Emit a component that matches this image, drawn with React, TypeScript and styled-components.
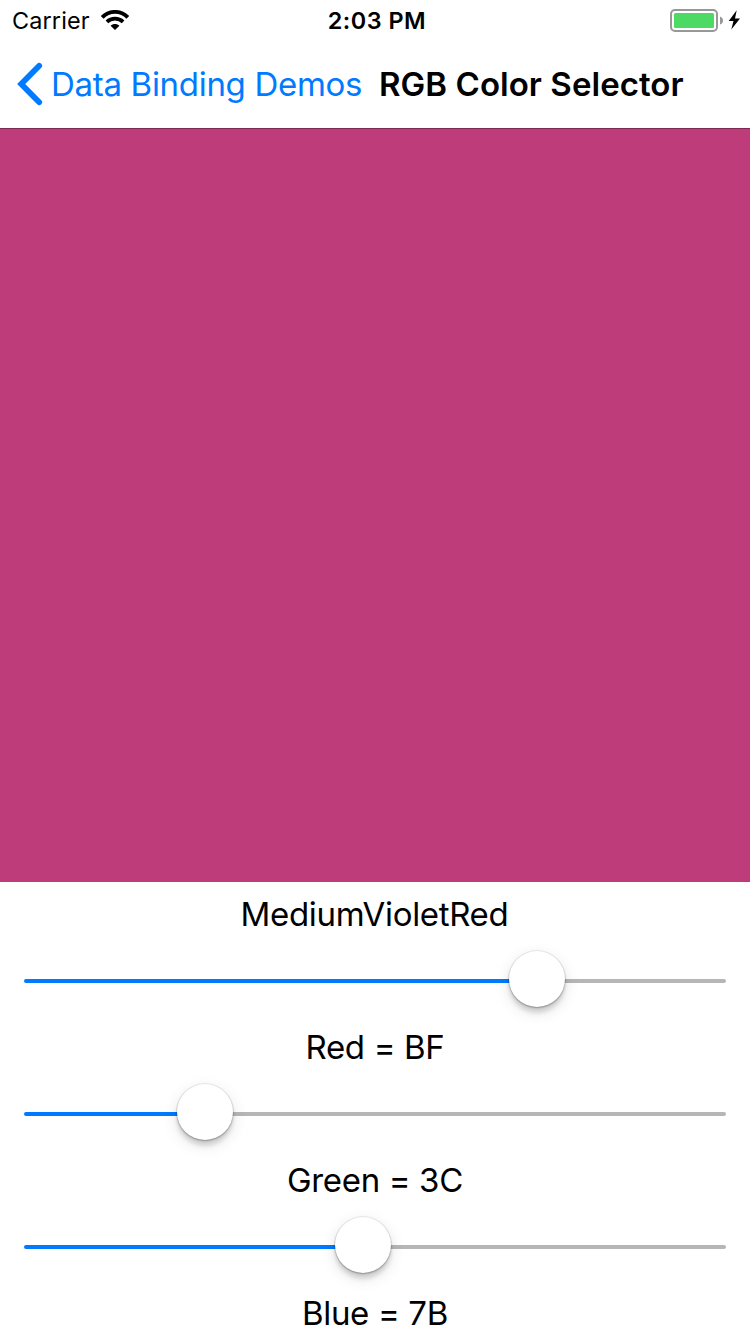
import React, { useState } from 'react';
import styled, { createGlobalStyle } from 'styled-components';

const GlobalStyle = createGlobalStyle`
  body { margin: 0; background: #fff; overflow: hidden; }
  * { box-sizing: border-box; }
`;

const Screen = styled.div`
  width: 750px;
  height: 1334px;
  overflow: hidden;
  display: flex;
  flex-direction: column;
  background: #fff;
  color: #000;
  font-family: Inter, 'Liberation Sans', sans-serif;
`;

const StatusBar = styled.header`
  flex: none;
  height: 40px;
  display: grid;
  grid-template-columns: 1fr auto 1fr;
  align-items: center;
  padding: 0 8px 0 12px;
`;

const StatusGroup = styled.div<{ $end?: boolean }>`
  display: flex;
  align-items: center;
  justify-content: ${(p) => (p.$end ? 'flex-end' : 'flex-start')};
`;

const Carrier = styled.span`
  font-size: 23.4px;
  line-height: 38px;
  padding-top: 2px;
  letter-spacing: 0.15px;
  margin-right: 11px;
`;

const Clock = styled.span`
  font-size: 23.4px;
  line-height: 38px;
  padding-top: 2px;
  font-weight: 600;
  letter-spacing: 0.5px;
`;

const NavBar = styled.nav`
  flex: none;
  height: 88px;
  display: flex;
  align-items: center;
  padding-left: 17px;
`;

const BackButton = styled.a`
  display: flex;
  align-items: center;
  color: #007aff;
  font-size: 33px;
  letter-spacing: -0.3px;
  white-space: nowrap;
  width: 362px;

  svg { margin-right: 8px; flex: none; }
`;

const Title = styled.h1`
  margin: 0;
  font-size: 33px;
  font-weight: 600;
  letter-spacing: 0.05px;
  white-space: nowrap;
`;

const Swatch = styled.div`
  flex: none;
  height: 754px;
  border-top: 1px solid #7e2852;
`;

const ColorName = styled.div`
  flex: none;
  height: 64px;
  line-height: 64px;
  padding-right: 1px;
  text-align: center;
  font-size: 33px;
  letter-spacing: -0.33px;
`;

const Channel = styled.section`
  flex: none;
  height: 133px;
  padding: 5px 24px 0;
`;

const ChannelLabel = styled.div`
  line-height: 68px;
  padding-top: 6px;
  text-align: center;
  font-size: 33px;
  letter-spacing: -0.36px;
  white-space: nowrap;
`;

const Range = styled.input`
  appearance: none;
  display: block;
  width: 702px;
  height: 56px;
  margin: 0;
  outline: none;
  background: transparent;

  &::-webkit-slider-runnable-track {
    height: 4px;
    border-radius: 2px;
    margin-top: 4px;
    background: linear-gradient(#007aff, #007aff) 0 0 / var(--fill) 100% no-repeat, #b6b6b6;
  }

  &::-webkit-slider-thumb {
    appearance: none;
    width: 56px;
    height: 56px;
    margin-top: -28px;
    border-radius: 50%;
    background: #fff;
    box-shadow: 0 0 0 1px rgba(0, 0, 0, 0.06), 0 1px 2px rgba(0, 0, 0, 0.28),
      0 6px 4px rgba(0, 0, 0, 0.12), 0 5px 16px rgba(0, 0, 0, 0.12);
  }
`;

const WifiIcon = () => (
  <svg width="28" height="20" viewBox="0 0 28 20" fill="none" stroke="#000">
    <path d="M1.2 7.3C8.2 0.1 19.8 0.1 26.8 7.3" strokeWidth="3.9" />
    <path d="M5.9 11.9C10.4 7.6 17.6 7.6 22.1 11.9" strokeWidth="3.8" />
    <path d="M9.6 15.7C12 13.3 16 13.3 18.4 15.7L14 20Z" fill="#000" stroke="none" />
  </svg>
);

const BatteryIcon = () => (
  <svg width="72" height="24" viewBox="0 0 72 24">
    <rect x="1" y="2" width="46" height="21" rx="4" fill="#fff" stroke="#989898" strokeWidth="2" />
    <rect x="4" y="5" width="40" height="15" rx="1.5" fill="#4cd964" />
    <path d="M50 8.5Q53 9.5 53 12.5T50 16.5Z" fill="#989898" />
    <path d="M66.7 2.3L58.7 13H63.5L61.3 21.5L70 10.5H65Z" fill="#000" />
  </svg>
);

const ChevronIcon = () => (
  <svg width="26" height="44" viewBox="0 0 26 44" fill="none" stroke="#007aff">
    <path d="M22.2 3.8L4.2 22L22.2 40.2" strokeWidth="5.8" strokeLinecap="round" strokeLinejoin="miter" />
  </svg>
);

const CHANNELS = ['Red', 'Green', 'Blue'];
const hex = (v: number) => Math.round(v).toString(16).toUpperCase().padStart(2, '0');

export default function App() {
  const [rgb, setRgb] = useState([191.4, 60.4, 122.6]);

  return (
    <Screen>
      <GlobalStyle />
      <StatusBar>
        <StatusGroup>
          <Carrier>Carrier</Carrier>
          <WifiIcon />
        </StatusGroup>
        <Clock>2:03 PM</Clock>
        <StatusGroup $end>
          <BatteryIcon />
        </StatusGroup>
      </StatusBar>
      <NavBar>
        <BackButton>
          <ChevronIcon />
          Data Binding Demos
        </BackButton>
        <Title>RGB Color Selector</Title>
      </NavBar>
      <Swatch style={{ backgroundColor: `rgb(${rgb.map(Math.round).join(',')})` }} />
      <ColorName>MediumVioletRed</ColorName>
      {CHANNELS.map((name, i) => (
        <Channel key={name}>
          <Range
            type="range"
            min={0}
            max={255}
            step="any"
            value={rgb[i]}
            aria-label={name}
            style={{ '--fill': `${28 + (rgb[i] / 255) * 646}px` } as React.CSSProperties}
            onChange={(e) => setRgb(rgb.map((v, j) => (j === i ? Number(e.target.value) : v)))}
          />
          <ChannelLabel>
            {name} = {hex(rgb[i])}
          </ChannelLabel>
        </Channel>
      ))}
    </Screen>
  );
}
